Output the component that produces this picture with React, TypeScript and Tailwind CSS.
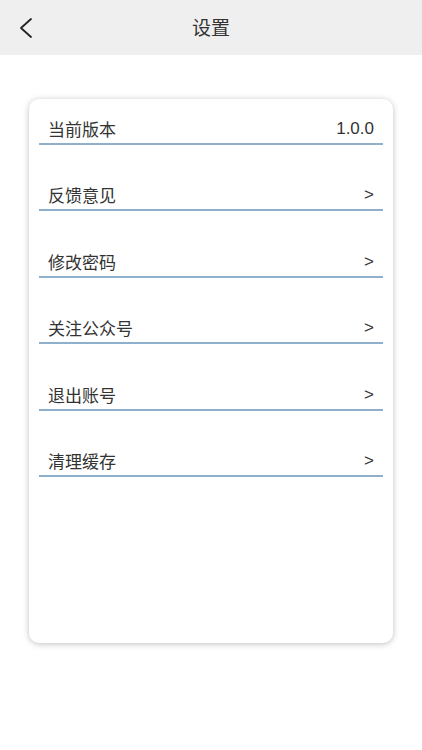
const rows = [
  { label: '当前版本', value: '1.0.0' },
  { label: '反馈意见', value: '>' },
  { label: '修改密码', value: '>' },
  { label: '关注公众号', value: '>' },
  { label: '退出账号', value: '>' },
  { label: '清理缓存', value: '>' },
]

export default function App() {
  return (
    <div
      className="w-[422px] h-[750px] bg-white text-[#333]"
      style={{ fontFamily: '"Noto Sans CJK SC", "Liberation Sans", sans-serif' }}
    >
      <div className="relative h-[55px] bg-[#efefef] flex items-center justify-center">
        <svg className="absolute left-[18px] top-[17px]" width="16" height="22" viewBox="0 0 16 22" fill="none">
          <path d="M13 2 L3 11 L13 20" stroke="#222" strokeWidth="1.8" strokeLinecap="round" strokeLinejoin="round" />
        </svg>
        <span className="text-[19px] text-[#333]">设置</span>
      </div>

      <div className="mx-[29px] mt-[44px] h-[544px] bg-white rounded-[10px] shadow-[0_1px_6px_rgba(0,0,0,0.25)] px-[10px]">
        {rows.map((row, i) => (
          <div
            key={row.label}
            className={`${i === 0 ? 'h-[46px]' : 'h-[66.4px]'} flex items-end justify-between border-b-2 border-[#8fb0cc] px-[9px] leading-[28px] text-[17px]`}
          >
            <span>{row.label}</span>
            <span style={{ fontFamily: '"Liberation Sans", sans-serif' }}>{row.value}</span>
          </div>
        ))}
      </div>
    </div>
  )
}
